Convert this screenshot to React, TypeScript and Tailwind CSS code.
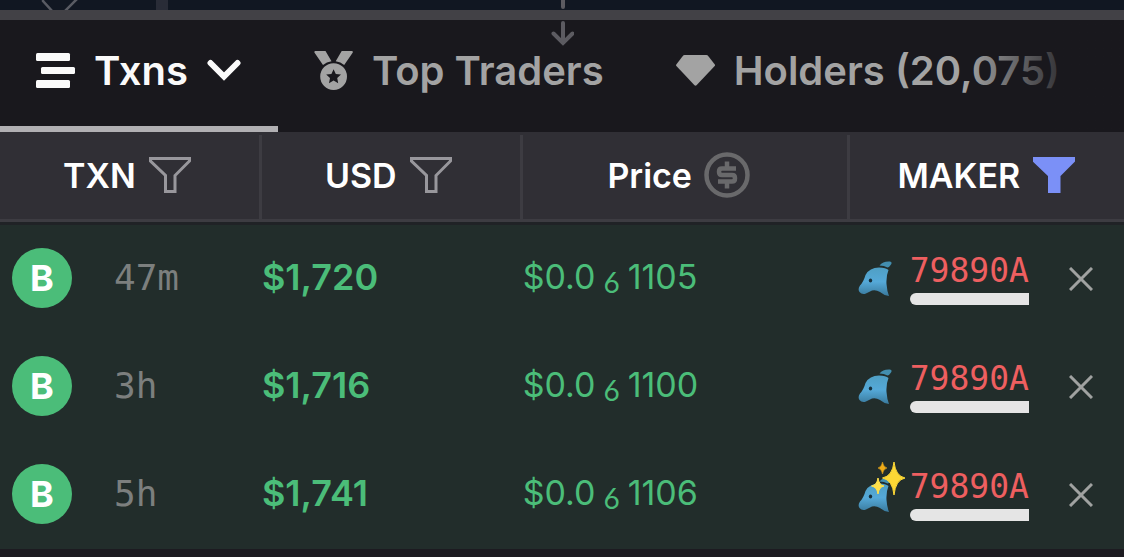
import React from 'react';

interface Txn {
  id: number;
  age: string;
  usd: string;
  zeros: string;
  digits: string;
  maker: string;
  isNew?: boolean;
}

const txns: Txn[] = [
  { id: 1, age: '47m', usd: '$1,720', zeros: '6', digits: '1105', maker: '79890A' },
  { id: 2, age: '3h', usd: '$1,716', zeros: '6', digits: '1100', maker: '79890A' },
  { id: 3, age: '5h', usd: '$1,741', zeros: '6', digits: '1106', maker: '79890A', isNew: true },
];

const ListIcon = () => (
  <svg className="w-10 h-9 shrink-0" viewBox="0 0 40 36" fill="currentColor" aria-hidden="true">
    <rect x="0" y="0" width="34" height="8" rx="1.5" />
    <rect x="5" y="14" width="34" height="7" rx="1.5" />
    <rect x="0" y="27" width="34" height="8" rx="1.5" />
  </svg>
);

const ChevronIcon = () => (
  <svg className="w-9 h-6 shrink-0" viewBox="0 0 36 24" fill="none" stroke="currentColor" strokeWidth="6" strokeLinecap="round" strokeLinejoin="miter" aria-hidden="true">
    <path d="M4.500 4 18 17.500 31.500 4" />
  </svg>
);

const MedalIcon = () => (
  <svg className="w-10 h-10 shrink-0" viewBox="0 0 40 40" fill="currentColor" aria-hidden="true">
    <path d="M1.200 0H11.500L17.500 10.200Q12.500 11 9 14L.4 1.600Q0 .4 1.200 0Z" />
    <path d="M38 0H27.700L21.700 10.200Q26.700 11 30.200 14L38.800 1.600Q39.200.4 38 0Z" />
    <path
      fillRule="evenodd"
      d="M19.600 12.200A13.400 13.400 0 1 1 19.600 39A13.400 13.400 0 1 1 19.600 12.200ZM19.600 18.200 17.400 22.900 12.200 23.500 16 27 15 32.200 19.600 29.600 24.200 32.200 23.200 27 27 23.500 21.800 22.900Z"
    />
  </svg>
);

const GemIcon = () => (
  <svg className="w-10 h-8 shrink-0" viewBox="0 0 40 32" fill="currentColor" aria-hidden="true">
    <path d="M8.500 0H30.500Q31.300 0 31.800.6L38.800 9.500Q39.300 10.300 38.700 11L20.500 30.300Q19.500 31.200 18.500 30.300L.4 11Q-.2 10.300.3 9.500L7.200.6Q7.700 0 8.500 0Z" />
  </svg>
);

const FilterIcon = ({ active = false }: { active?: boolean }) => (
  <svg
    className={active ? 'w-11 h-9 shrink-0 text-[#7b90f7]' : 'w-11 h-9 shrink-0 text-[#98979c]'}
    viewBox="0 0 44 36"
    fill={active ? 'currentColor' : 'none'}
    stroke="currentColor"
    strokeWidth="3"
    aria-hidden="true"
  >
    <path d="M2.500 1.500H41.500V4L27 18.500V34.500H17.500V18.500L2.500 4Z" />
  </svg>
);

const DollarIcon = () => (
  <svg className="w-[46px] h-[46px] shrink-0 text-[#69696b]" viewBox="0 0 46 46" fill="none" stroke="currentColor" strokeWidth="4.500" aria-hidden="true">
    <circle cx="23" cy="23" r="20.500" />
    <path d="M23 9.500V15M23 31V36.500M32 16.500H18Q15 16.500 15 19.700Q15 23 18 23H28Q31 23 31 26.200Q31 29.500 28 29.500H14" />
  </svg>
);

const DolphinIcon = () => (
  <svg className="w-9 h-9 shrink-0" viewBox="0 0 36 36" aria-hidden="true">
    <defs>
      <linearGradient id="dolphin" x1="0" y1="0" x2="0" y2="1">
        <stop offset="0" stopColor="#4f9fc4" />
        <stop offset=".5" stopColor="#55a9d8" />
        <stop offset="1" stopColor="#39799c" />
      </linearGradient>
    </defs>
    <path d="M21.500 4.500Q25 0 32 .5Q34.500 1 33 3.500Q31.500 6 29.500 6.500Q26 4.500 21.500 4.500Z" fill="#438eaf" />
    <path d="M7.500 14Q11.500 6.500 21 6.500Q28 6.500 30.500 9Q28 15 28.500 23Q29 30 31 35Q26 34.500 22 31Q18 28.500 14 29.500Q11 31 8 32.500Q4 34 1.500 31Q-.5 28 2 24.500Q5.500 21 7.500 14Z" fill="url(#dolphin)" />
    <ellipse cx="12.500" cy="19.500" rx="1.700" ry="2" fill="#17303d" />
  </svg>
);

const SparklesIcon = () => (
  <svg className="absolute left-3 -top-4 w-9 h-9" viewBox="0 0 36 36" aria-hidden="true">
    <path d="M24 1Q25.500 15 35 17Q25.500 19 24 34Q22.500 19 12.500 17Q22.500 15 24 1Z" fill="#fdd835" stroke="#fdd835" strokeWidth="1" />
    <path d="M8 17Q9 24 14 25Q9 26 8 33Q7 26 1.500 25Q7 24 8 17Z" fill="#ffe04a" stroke="#ffe04a" strokeWidth="1" />
    <path d="M12.500 1Q13.200 6 17 7Q13.200 8 12.500 13Q11.800 8 8 7Q11.800 6 12.500 1Z" fill="#f0ac18" stroke="#f0ac18" strokeWidth=".5" />
  </svg>
);

const CloseIcon = () => (
  <svg className="w-6 h-6" viewBox="0 0 24 24" fill="none" stroke="currentColor" strokeWidth="3" aria-hidden="true">
    <path d="M1 1 23 23M23 1 1 23" />
  </svg>
);

const ChartEdge = () => (
  <div className="relative h-5 bg-[#111722] border-b-[10px] border-[#424146]">
    <div className="flex h-full items-start" aria-hidden="true">
      <svg className="ml-10 w-10 h-[10px]" viewBox="0 0 40 10" fill="none" stroke="#595b63" strokeWidth="2.500">
        <path d="M3 -3V1L13 12M24 12 38 -2" />
      </svg>
      <div className="ml-[76px] w-3 h-full bg-[#292c37]" />
    </div>
    <svg className="absolute left-1/2 top-0 z-10 w-6 h-[46px] -translate-x-1/2 text-[#5c5b61]" viewBox="0 0 24 46" fill="none" stroke="currentColor" strokeWidth="4" strokeLinecap="round" aria-hidden="true">
      <path d="M13 -3V7M13 23V42M3.500 33.500 13 43 22.500 33.500" />
    </svg>
  </div>
);

const Tabs = () => (
  <nav className="relative flex h-28 overflow-hidden bg-[#19181d] text-[40px] leading-[48px] font-semibold whitespace-nowrap text-[#a3a3a3]">
    <button className="flex shrink-0 items-center gap-[18px] px-9 pb-1 text-[#fafafa] border-b-[6px] border-[#b1b0b3]">
      <ListIcon />
      <span>Txns</span>
      <ChevronIcon />
    </button>
    <button className="flex shrink-0 items-center gap-[18px] px-9 pb-[10px]">
      <MedalIcon />
      <span>Top Traders</span>
    </button>
    <button className="flex shrink-0 items-center gap-[18px] px-9 pb-[10px]">
      <GemIcon />
      <span>Holders (20,075)</span>
    </button>
    <div className="absolute inset-y-0 right-0 w-40 pointer-events-none bg-linear-to-r from-transparent to-[#19181d] to-75%" />
  </nav>
);

interface HeadCellProps {
  label: string;
  className?: string;
  children: React.ReactNode;
}

const HeadCell = ({ label, className = '', children }: HeadCellProps) => (
  <th scope="col" className="border-b-[3px] border-[#202226] p-0 font-semibold">
    <div className="border-b-[3px] border-[#3d3c42] pt-[3px]">
      <div className={`flex h-[84px] items-center justify-center gap-3 pb-1 border-[#3d3c42] ${className}`}>
        <span>{label}</span>
        <button aria-label={`${label} options`}>{children}</button>
      </div>
    </div>
  </th>
);

const TxnRow = ({ txn }: { txn: Txn }) => (
  <tr className="h-[108px] bg-[#222d2b]">
    <td className="p-0 pl-3 pb-[2px]">
      <div className="flex items-center gap-[42px]">
        <span className="flex size-[60px] shrink-0 items-center justify-center rounded-full bg-[#4bbd79] text-4xl font-bold text-white">B</span>
        <span className="font-['DejaVu_Sans_Mono',monospace] text-4xl text-[#7c7f7e]">{txn.age}</span>
      </div>
    </td>
    <td className="p-0 pb-1 text-4xl font-semibold text-[#4bbd79]">{txn.usd}</td>
    <td className="p-0 pb-1 text-[34px] leading-10 text-[#4bbd79]">
      <span className="flex items-baseline gap-2">
        <span>$0.0</span>
        <span className="relative top-1 font-['Lato',sans-serif] text-[28px]">{txn.zeros}</span>
        <span>{txn.digits}</span>
      </span>
    </td>
    <td className="p-0 pl-2">
      <div className="flex items-center">
        <span className="relative mr-4">
          <DolphinIcon />
          {txn.isNew && <SparklesIcon />}
        </span>
        <a href="#maker" className="flex flex-col gap-1 font-['DejaVu_Sans_Mono',monospace] text-[33px] leading-9 text-[#ee5f60]">
          <span>{txn.maker}</span>
          <span className="h-3 rounded-l-full bg-[#e5e5e5]" />
        </a>
        <button aria-label="Remove maker filter" className="ml-10 text-[#a0a2a1]">
          <CloseIcon />
        </button>
      </div>
    </td>
  </tr>
);

export default function App() {
  return (
    <div className="min-h-screen overflow-hidden bg-[#1d1b21] font-['Inter',sans-serif]">
      <ChartEdge />
      <Tabs />
      <table className="w-full table-fixed border-separate border-spacing-0 text-left whitespace-nowrap">
        <colgroup>
          <col className="w-[23.3%]" />
          <col className="w-[23.2%]" />
          <col className="w-[29.1%]" />
          <col />
        </colgroup>
        <thead className="bg-[#302f35] text-[34px] text-white">
          <tr>
            <HeadCell label="TXN" className="border-r-[3px] pr-1"><FilterIcon /></HeadCell>
            <HeadCell label="USD" className="border-r-[3px] pr-1"><FilterIcon /></HeadCell>
            <HeadCell label="Price" className="border-r-[3px] pr-3"><DollarIcon /></HeadCell>
            <HeadCell label="MAKER"><FilterIcon active /></HeadCell>
          </tr>
        </thead>
        <tbody>
          {txns.map((txn) => (
            <TxnRow key={txn.id} txn={txn} />
          ))}
        </tbody>
      </table>
    </div>
  );
}
